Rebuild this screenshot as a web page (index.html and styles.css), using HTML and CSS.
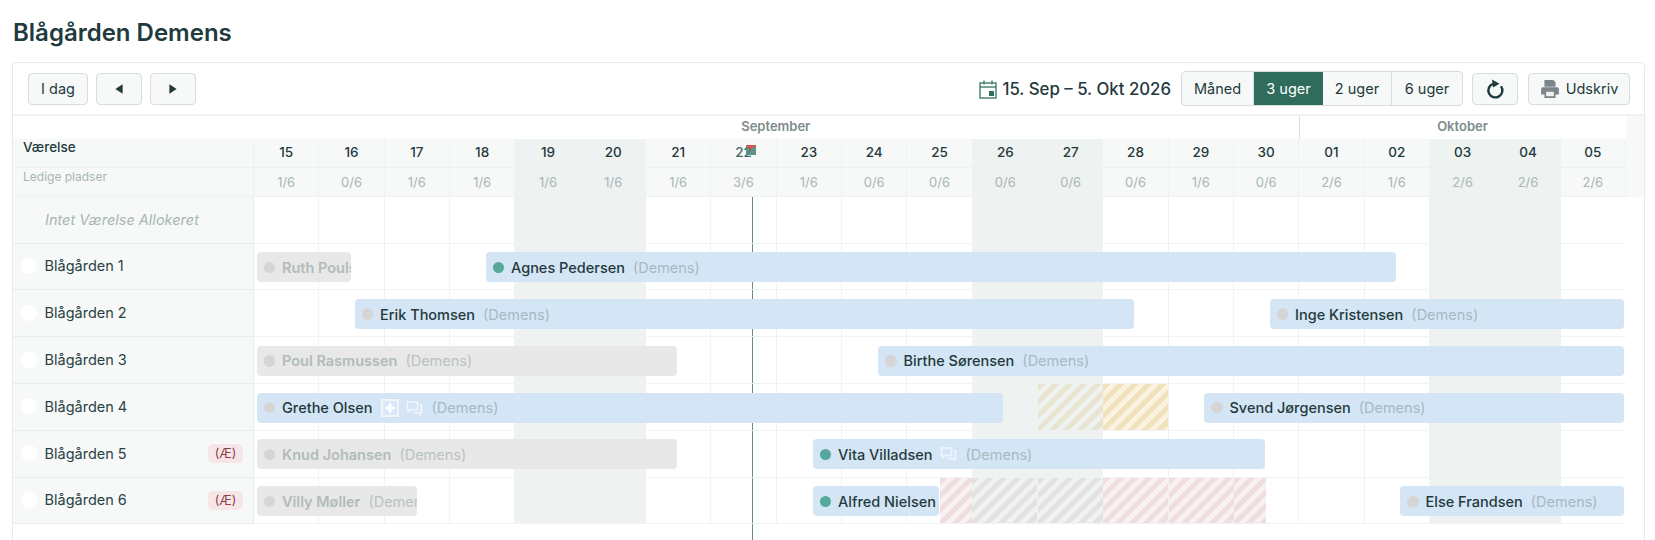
FILE: index.html
```html
<!DOCTYPE html>
<html lang="da">
<head>
<meta charset="utf-8">
<title>Blågården Demens</title>
<link rel="stylesheet" href="styles.css">
</head>
<body>
<h1 class="title">Blågården Demens</h1>
<section class="card">
  <div class="toolbar">
    <button class="btn btn-today">I dag</button>
    <button class="btn btn-arrow"><svg width="12" height="12" viewBox="0 0 10 10"><path d="M8 1v8L2 5z"/></svg></button>
    <button class="btn btn-arrow"><svg width="12" height="12" viewBox="0 0 10 10"><path d="M2 1v8l6-4z"/></svg></button>
    <div class="spacer"></div>
    <svg class="cal" width="18" height="20" viewBox="0 0 18 20"><path class="cal-line" d="M1 4h16v15H1zM1 8h16M5 1.500v4M13 1.500v4"/><rect class="cal-fill" x="10" y="12" width="5" height="5"/></svg>
    <div class="range">15. Sep – 5. Okt 2026</div>
    <div class="seg">
      <button class="seg-btn seg-m">Måned</button>
      <button class="seg-btn seg-active">3 uger</button>
      <button class="seg-btn">2 uger</button>
      <button class="seg-btn seg-l">6 uger</button>
    </div>
    <button class="btn btn-refresh"><svg width="20" height="22" viewBox="0 0 20 22"><path class="ref-line" d="M16 8.200A7 7 0 1 1 8 5.800"/><path class="ref-head" d="M7 1.500L14.500 5.800 8 9.500z"/></svg></button>
    <button class="btn btn-print"><svg width="20" height="20" viewBox="0 0 18 18"><path class="prn" d="M4 1h8l2 2v4H4zM2.500 7.500h13A1.500 1.500 0 0 1 17 9v5h-3v3H4v-3H1V9a1.500 1.500 0 0 1 1.500-1.500z"/><rect class="prn-in" x="5.500" y="11.500" width="7" height="4"/></svg>Udskriv</button>
  </div>

  <div class="months">
    <div class="corner"></div>
    <div class="month month-sep">September</div>
    <div class="month month-okt">Oktober</div>
    <div class="gutter-white"></div>
  </div>

  <div class="head-row head-days">
    <div class="head-label head-strong">Værelse</div>
    <div class="day-grid">
      <div class="d">15</div><div class="d">16</div><div class="d">17</div><div class="d">18</div><div class="d we">19</div><div class="d we">20</div><div class="d">21</div><div class="d today">22<i class="flag"></i></div><div class="d">23</div><div class="d">24</div><div class="d">25</div><div class="d we">26</div><div class="d we">27</div><div class="d">28</div><div class="d">29</div><div class="d">30</div><div class="d">01</div><div class="d">02</div><div class="d we">03</div><div class="d we">04</div><div class="d">05</div>
    </div>
    <div class="gutter"></div>
  </div>
  <div class="head-row head-avail">
    <div class="head-label head-muted">Ledige pladser</div>
    <div class="day-grid">
      <div class="a">1/6</div><div class="a">0/6</div><div class="a">1/6</div><div class="a">1/6</div><div class="a we">1/6</div><div class="a we">1/6</div><div class="a">1/6</div><div class="a">3/6</div><div class="a">1/6</div><div class="a">0/6</div><div class="a">0/6</div><div class="a we">0/6</div><div class="a we">0/6</div><div class="a">0/6</div><div class="a">1/6</div><div class="a">0/6</div><div class="a">2/6</div><div class="a">1/6</div><div class="a we">2/6</div><div class="a we">2/6</div><div class="a">2/6</div>
    </div>
    <div class="gutter"></div>
  </div>

  <div class="chart">
    <div class="cols">
      <div class="c"></div><div class="c"></div><div class="c"></div><div class="c"></div><div class="c cwe"></div><div class="c cwe"></div><div class="c"></div><div class="c"></div><div class="c"></div><div class="c"></div><div class="c"></div><div class="c cwe"></div><div class="c cwe"></div><div class="c"></div><div class="c"></div><div class="c"></div><div class="c"></div><div class="c"></div><div class="c cwe"></div><div class="c cwe"></div><div class="c"></div>
    </div>
    <div class="now"></div>

    <div class="room">
      <div class="room-label room-none">Intet Værelse Allokeret</div>
      <div class="track"></div>
    </div>

    <div class="room">
      <div class="room-label"><i class="knob"></i>Blågården 1</div>
      <div class="track">
        <div class="bar bar-gray" style="left:2.500px;width:94.500px"><i class="dot"></i><b>Ruth Poulsen</b><span>(Demens)</span></div>
        <div class="bar" style="left:231.500px;width:910px"><i class="dot dot-on"></i><b>Agnes Pedersen</b><span>(Demens)</span></div>
      </div>
    </div>

    <div class="room">
      <div class="room-label"><i class="knob"></i>Blågården 2</div>
      <div class="track">
        <div class="bar" style="left:100.500px;width:779px"><i class="dot"></i><b>Erik Thomsen</b><span>(Demens)</span></div>
        <div class="bar" style="left:1015.500px;width:354px"><i class="dot"></i><b>Inge Kristensen</b><span>(Demens)</span></div>
      </div>
    </div>

    <div class="room">
      <div class="room-label"><i class="knob"></i>Blågården 3</div>
      <div class="track">
        <div class="bar bar-gray" style="left:2.500px;width:420px"><i class="dot"></i><b>Poul Rasmussen</b><span>(Demens)</span></div>
        <div class="bar" style="left:624px;width:745.500px"><i class="dot"></i><b>Birthe Sørensen</b><span>(Demens)</span></div>
      </div>
    </div>

    <div class="room">
      <div class="room-label"><i class="knob"></i>Blågården 4</div>
      <div class="track">
        <div class="bar" style="left:2.500px;width:746px"><i class="dot"></i><b>Grethe Olsen</b>
          <svg class="ico-plus" width="18" height="18" viewBox="0 0 18 18"><rect x="1" y="1" width="16" height="16"/><path d="M7.500 4.500h3v3h3v3h-3v3h-3v-3h-3v-3h3z"/></svg>
          <svg class="ico-chat" width="17" height="16" viewBox="0 0 17 16"><path d="M1.500 2h10v7.500H5L2.500 11.500V9.500h-1zM13.500 5h2v7.500h-1v2l-2.500-2H7"/></svg>
          <span class="after-ico">(Demens)</span></div>
        <div class="hatch hatch-beige" style="left:784px;width:65px"></div>
        <div class="hatch hatch-yellow" style="left:849px;width:65px"></div>
        <div class="bar" style="left:950px;width:419.500px"><i class="dot"></i><b>Svend Jørgensen</b><span>(Demens)</span></div>
      </div>
    </div>

    <div class="room">
      <div class="room-label"><i class="knob"></i>Blågården 5<em class="badge">(Æ)</em></div>
      <div class="track">
        <div class="bar bar-gray" style="left:2.500px;width:420px"><i class="dot"></i><b>Knud Johansen</b><span>(Demens)</span></div>
        <div class="bar" style="left:558.500px;width:452.500px"><i class="dot dot-on"></i><b>Vita Villadsen</b>
          <svg class="ico-chat" width="17" height="16" viewBox="0 0 17 16"><path d="M1.500 2h10v7.500H5L2.500 11.500V9.500h-1zM13.500 5h2v7.500h-1v2l-2.500-2H7"/></svg>
          <span class="after-ico">(Demens)</span></div>
      </div>
    </div>

    <div class="room">
      <div class="room-label"><i class="knob"></i>Blågården 6<em class="badge">(Æ)</em></div>
      <div class="track">
        <div class="bar bar-gray" style="left:2.500px;width:160.500px"><i class="dot"></i><b>Villy Møller</b><span>(Demens)</span></div>
        <div class="bar" style="left:558.500px;width:126px"><i class="dot dot-on"></i><b>Alfred Nielsen</b><span>(Demens)</span></div>
        <div class="hatch hatch-pink" style="left:685.500px;width:32px"></div>
        <div class="hatch hatch-gray" style="left:718px;width:65px"></div>
        <div class="hatch hatch-gray" style="left:783.500px;width:65px"></div>
        <div class="hatch hatch-pink" style="left:849px;width:65px"></div>
        <div class="hatch hatch-pink" style="left:914.500px;width:65px"></div>
        <div class="hatch hatch-pink" style="left:979.500px;width:32.500px"></div>
        <div class="bar" style="left:1146px;width:223.500px"><i class="dot"></i><b>Else Frandsen</b><span>(Demens)</span></div>
      </div>
    </div>
  </div>
</section>
</body>
</html>
```
FILE: styles.css
```css
* { box-sizing: border-box; }
html, body { height: 100%; }
body {
  margin: 0;
  padding: 0 10px 0 12px;
  display: flex;
  flex-direction: column;
  overflow: hidden;
  background: #fff;
  color: #24393c;
  font-family: Inter, "Liberation Sans", sans-serif;
}
.title {
  margin: 0 0 0 1px;
  height: 62px;
  padding-top: 17px;
  font-size: 24px;
  line-height: 32px;
  font-weight: 600;
  color: #213a3d;
}
.card {
  flex: 1;
  min-height: 0;
  border: 1px solid #e6ebe9;
  border-bottom: 0;
  border-radius: 4px 4px 0 0;
  display: flex;
  flex-direction: column;
}
.toolbar {
  height: 53px;
  flex: none;
  display: flex;
  align-items: center;
  padding: 0 14px 0 15px;
  border-bottom: 2px solid #f1f3f3;
}
.spacer { flex: 1; }
.btn {
  height: 32px;
  background: #f6f9f8;
  border: 1px solid #d6dddb;
  border-radius: 4px;
  font: 400 14.500px Inter, sans-serif;
  color: #24393c;
  padding: 0;
  display: flex;
  align-items: center;
  justify-content: center;
}
.btn-today { width: 60px; margin-right: 8px; }
.btn-arrow { width: 46px; margin-right: 8px; }
.btn-arrow svg { fill: #24393c; }
.cal { margin-right: 5px; }
.cal-line { fill: none; stroke: #4f8474; stroke-width: 1.500; }
.cal-fill { fill: #2f6f5e; }
.range {
  font-size: 16.800px;
  font-weight: 500;
  color: #24393c;
  margin-right: 10px;
}
.seg {
  display: flex;
  height: 35px;
  margin-right: 9px;
  border: 1px solid #d6dddb;
  border-radius: 4px;
  background: #f6f9f8;
  overflow: hidden;
}
.seg-btn {
  width: 69px;
  border: 0;
  border-right: 1px solid #d6dddb;
  background: none;
  padding: 0;
  font: 400 14.500px Inter, sans-serif;
  color: #24393c;
}
.seg-m { width: 72px; }
.seg-l { width: 70px; border-right: 0; }
.seg-active { background: #2f6c5b; color: #fff; border-right: 0; }
.btn-refresh { width: 46px; margin-right: 10px; }
.ref-line { fill: none; stroke: #1f3a3d; stroke-width: 2.400; }
.ref-head { fill: #1f3a3d; }
.btn-print { width: 102px; gap: 6px; }
.prn { fill: #7c8688; }
.prn-in { fill: #eef0f0; }

.months { display: flex; height: 23px; flex: none; }
.corner { width: 240px; flex: none; }
.month {
  font-size: 13px;
  font-weight: 600;
  line-height: 21px;
  text-align: center;
  color: #7e8a8c;
}
.month-sep { width: 1045.500px; flex: none; }
.month-okt { width: 327px; flex: none; border-left: 1px solid #d9dfde; }
.gutter-white { flex: 1; background: #f6f9f8; }

.head-row { display: flex; flex: none; }
.head-days { height: 28.500px; }
.head-avail { height: 29.300px; }
.head-label {
  width: 241px;
  flex: none;
  background: #f6f9f8;
  padding-left: 10px;
  border-bottom: 1px solid #eef1f0;
  border-right: 1px solid #eef1f0;
}
.head-strong { font-size: 13.500px; font-weight: 500; line-height: 16px; color: #24393c; }
.head-muted { font-size: 12px; line-height: 18px; color: #a9b6b4; }
.day-grid {
  width: 1372px;
  flex: none;
  display: grid;
  grid-template-columns: repeat(21, 1fr);
}
.gutter { flex: 1; background: #f6f9f8; }
.d, .a {
  background: #f6f9f8;
  border-right: 1px solid #f0f3f2;
  border-bottom: 1px solid #eef1f0;
  text-align: center;
  position: relative;
}
.d { font-size: 13.500px; font-weight: 500; line-height: 26px; color: #24393c; }
.a { font-size: 13px; line-height: 28px; color: #a9b6b4; }
.d.we, .a.we { background: #eef2f1; border-right: 0; }
.today { color: #3f6a68; }
.flag {
  position: absolute;
  left: 35px;
  top: 6px;
  width: 10px;
  height: 10px;
  background: #4f8a7d;
  opacity: .9;
}
.flag::before {
  content: "";
  position: absolute;
  left: 0;
  top: 0;
  border-style: solid;
  border-width: 5px 5px 0 5px;
  border-color: #d9413f transparent transparent transparent;
}

.chart { position: relative; flex: 1; min-height: 0; }
.cols {
  position: absolute;
  left: 241px;
  top: 0;
  width: 1372px;
  height: 327.600px;
  display: grid;
  grid-template-columns: repeat(21, 1fr);
}
.c { border-right: 1px solid #f0f3f2; }
.c:last-child { border-right: 0; }
.cwe { background: #eef2f1; border-right: 0; }
.now {
  position: absolute;
  left: 739px;
  top: 0;
  bottom: 0;
  width: 1px;
  background: #6a8a88;
}
.room { position: relative; display: flex; width: 1613px; height: 46.800px; }
.room-label {
  width: 241px;
  flex: none;
  display: flex;
  align-items: center;
  font-size: 14.500px;
  color: #2b4245;
  background: #f6f9f8;
  border-bottom: 1px solid #e8edeb;
  border-right: 1px solid #e8edeb;
  padding-left: 8px;
  padding-bottom: 1px;
}
.room-none { padding-left: 32px; font-style: italic; color: #a9b6b4; }
.knob {
  width: 16px;
  height: 16px;
  border-radius: 50%;
  background: #fff;
  margin-right: 7.500px;
  flex: none;
}
.badge {
  margin: 1px 10px 0 auto;
  width: 35px;
  height: 19px;
  border-radius: 5px;
  background: #f7e6e8;
  color: #8a3f47;
  font-size: 12.500px;
  font-style: normal;
  line-height: 19px;
  text-align: center;
}
.track { position: relative; width: 1372px; flex: none; border-bottom: 1px solid #f0f3f2; }
.bar {
  position: absolute;
  top: 8.700px;
  height: 30px;
  display: flex;
  align-items: center;
  padding-left: 7px;
  background: #d4e6f6;
  border-radius: 4px;
  overflow: hidden;
  white-space: nowrap;
  font-size: 14.500px;
}
.bar b { font-weight: 500; color: #24393c; }
.bar span { margin-left: 8px; color: #a8b8bf; font-weight: 400; }
.bar span.after-ico { margin-left: 9px; }
.bar-gray { background: #e8e8e8; }
.bar-gray b { color: #b1bcb9; font-weight: 600; }
.bar-gray span { color: #b8c2c0; }
.dot { width: 11.500px; height: 11.500px; border-radius: 50%; background: #d5d5d5; margin-right: 7px; flex: none; }
.dot-on { background: #56a89a; }
.ico-plus { margin-left: 8px; flex: none; }
.ico-plus rect { fill: rgba(255,255,255,.12); stroke: rgba(255,255,255,.8); stroke-width: 1.500; }
.ico-plus path { fill: #fff; }
.ico-chat { margin-left: 7px; flex: none; fill: none; stroke: rgba(255,255,255,.65); stroke-width: 1.500; }
.hatch { position: absolute; top: 0; bottom: 0; }
.hatch-pink { background: repeating-linear-gradient(135deg, #efdde0 0 5px, #f8f0f1 5px 10px); }
.hatch-gray { background: repeating-linear-gradient(135deg, #e3e2e1 0 5px, #eef2f1 5px 10px); }
.hatch-beige { background: repeating-linear-gradient(135deg, #e9e4d0 0 5px, #eef2f1 5px 10px); }
.hatch-yellow { background: repeating-linear-gradient(135deg, #f1e1bd 0 5px, #faf3df 5px 10px); }
```
